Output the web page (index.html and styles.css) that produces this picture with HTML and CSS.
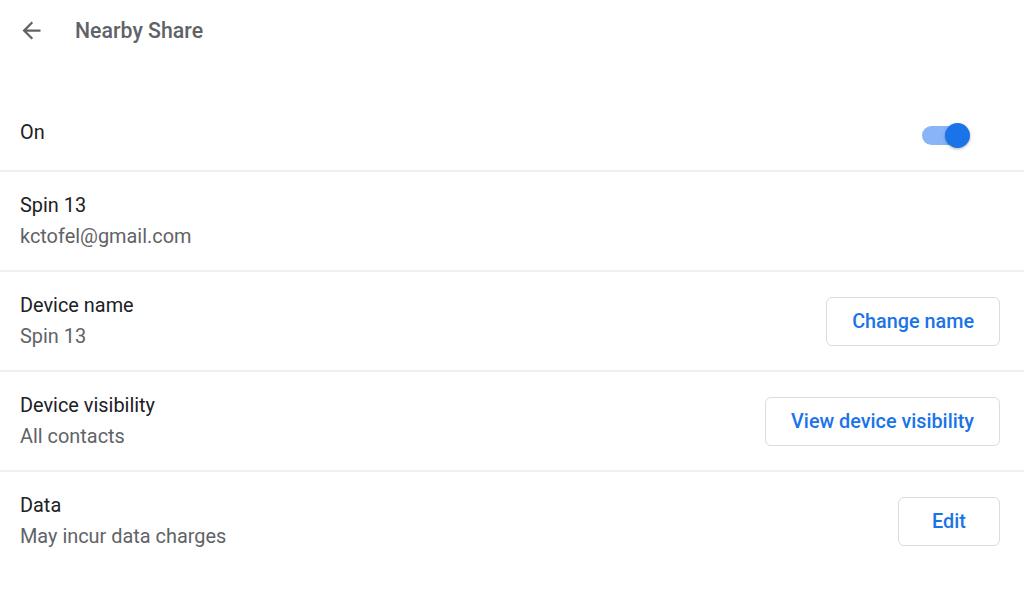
FILE: index.html
```html
<!DOCTYPE html>
<html lang="en">
<head>
    <meta charset="UTF-8">
    <meta name="viewport" content="width=device-width, initial-scale=1.0">
    <title>Nearby Share</title>
    <link rel="stylesheet" href="styles.css">
</head>
<body>

<header class="page-header">
    <button class="back-btn" aria-label="Back">
        <svg width="27" height="27" viewBox="0 0 24 24">
            <path d="M20 11H7.83l5.59-5.59L12 4l-8 8 8 8 1.41-1.41L7.83 13H20v-2z" fill="#5f6368"/>
        </svg>
    </button>
    <h1>Nearby Share</h1>
</header>

<div class="settings-list">
    <div class="row row-toggle">
        <div class="label">On</div>
        <div class="toggle on">
            <div class="track"></div>
            <div class="knob"></div>
        </div>
    </div>

    <div class="row">
        <div class="text">
            <div class="label">Spin 13</div>
            <div class="sub">kctofel@gmail.com</div>
        </div>
    </div>

    <div class="row">
        <div class="text">
            <div class="label">Device name</div>
            <div class="sub">Spin 13</div>
        </div>
        <button class="action-btn">Change name</button>
    </div>

    <div class="row">
        <div class="text">
            <div class="label">Device visibility</div>
            <div class="sub">All contacts</div>
        </div>
        <button class="action-btn">View device visibility</button>
    </div>

    <div class="row last">
        <div class="text">
            <div class="label">Data</div>
            <div class="sub">May incur data charges</div>
        </div>
        <button class="action-btn">Edit</button>
    </div>
</div>

</body>
</html>
```

FILE: styles.css
```css
body {
    font-family: Roboto, "Noto Sans", Arial, sans-serif;
    background-color: #ffffff;
    color: #202124;
    margin: 0;
    padding: 0;
}

.page-header {
    height: 60px;
    display: flex;
    align-items: center;
    padding-left: 18px;
}

.back-btn {
    background: none;
    border: none;
    padding: 0;
    width: 27px;
    height: 27px;
    margin-right: 30px;
    cursor: pointer;
}

.back-btn svg {
    display: block;
}

h1 {
    margin: 0;
    font-size: 21.3px;
    font-weight: 500;
    color: #5f6368;
}

.settings-list {
    margin-top: 34px;
}

.row {
    display: flex;
    align-items: center;
    justify-content: space-between;
    height: 98px;
    padding: 0 24px 0 20px;
    border-bottom: 2px solid #f0f0f0;
}

.row-toggle {
    height: 76px;
}

.row.last {
    border-bottom: none;
}

.label {
    font-size: 19.9px;
    line-height: 31px;
    color: #202124;
}

.sub {
    font-size: 19.9px;
    line-height: 31px;
    color: #5f6368;
}

.toggle {
    position: relative;
    width: 48px;
    height: 25px;
    margin-top: 6px;
    margin-right: 30px;
}

.toggle .track {
    position: absolute;
    left: 0;
    top: 3px;
    width: 40px;
    height: 19px;
    border-radius: 10px;
    background-color: #8ab4f8;
}

.toggle .knob {
    position: absolute;
    right: 0;
    top: 0;
    width: 25px;
    height: 25px;
    border-radius: 50%;
    background-color: #1a73e8;
    box-shadow: 0 1px 3px rgba(0, 0, 0, 0.3);
}

.action-btn {
    background-color: #ffffff;
    color: #1a73e8;
    font-family: Roboto, "Noto Sans", Arial, sans-serif;
    font-size: 19.8px;
    font-weight: 500;
    height: 49px;
    min-width: 102px;
    padding: 0 25px;
    border: 1.5px solid #dadce0;
    border-radius: 6px;
    cursor: pointer;
}
```
